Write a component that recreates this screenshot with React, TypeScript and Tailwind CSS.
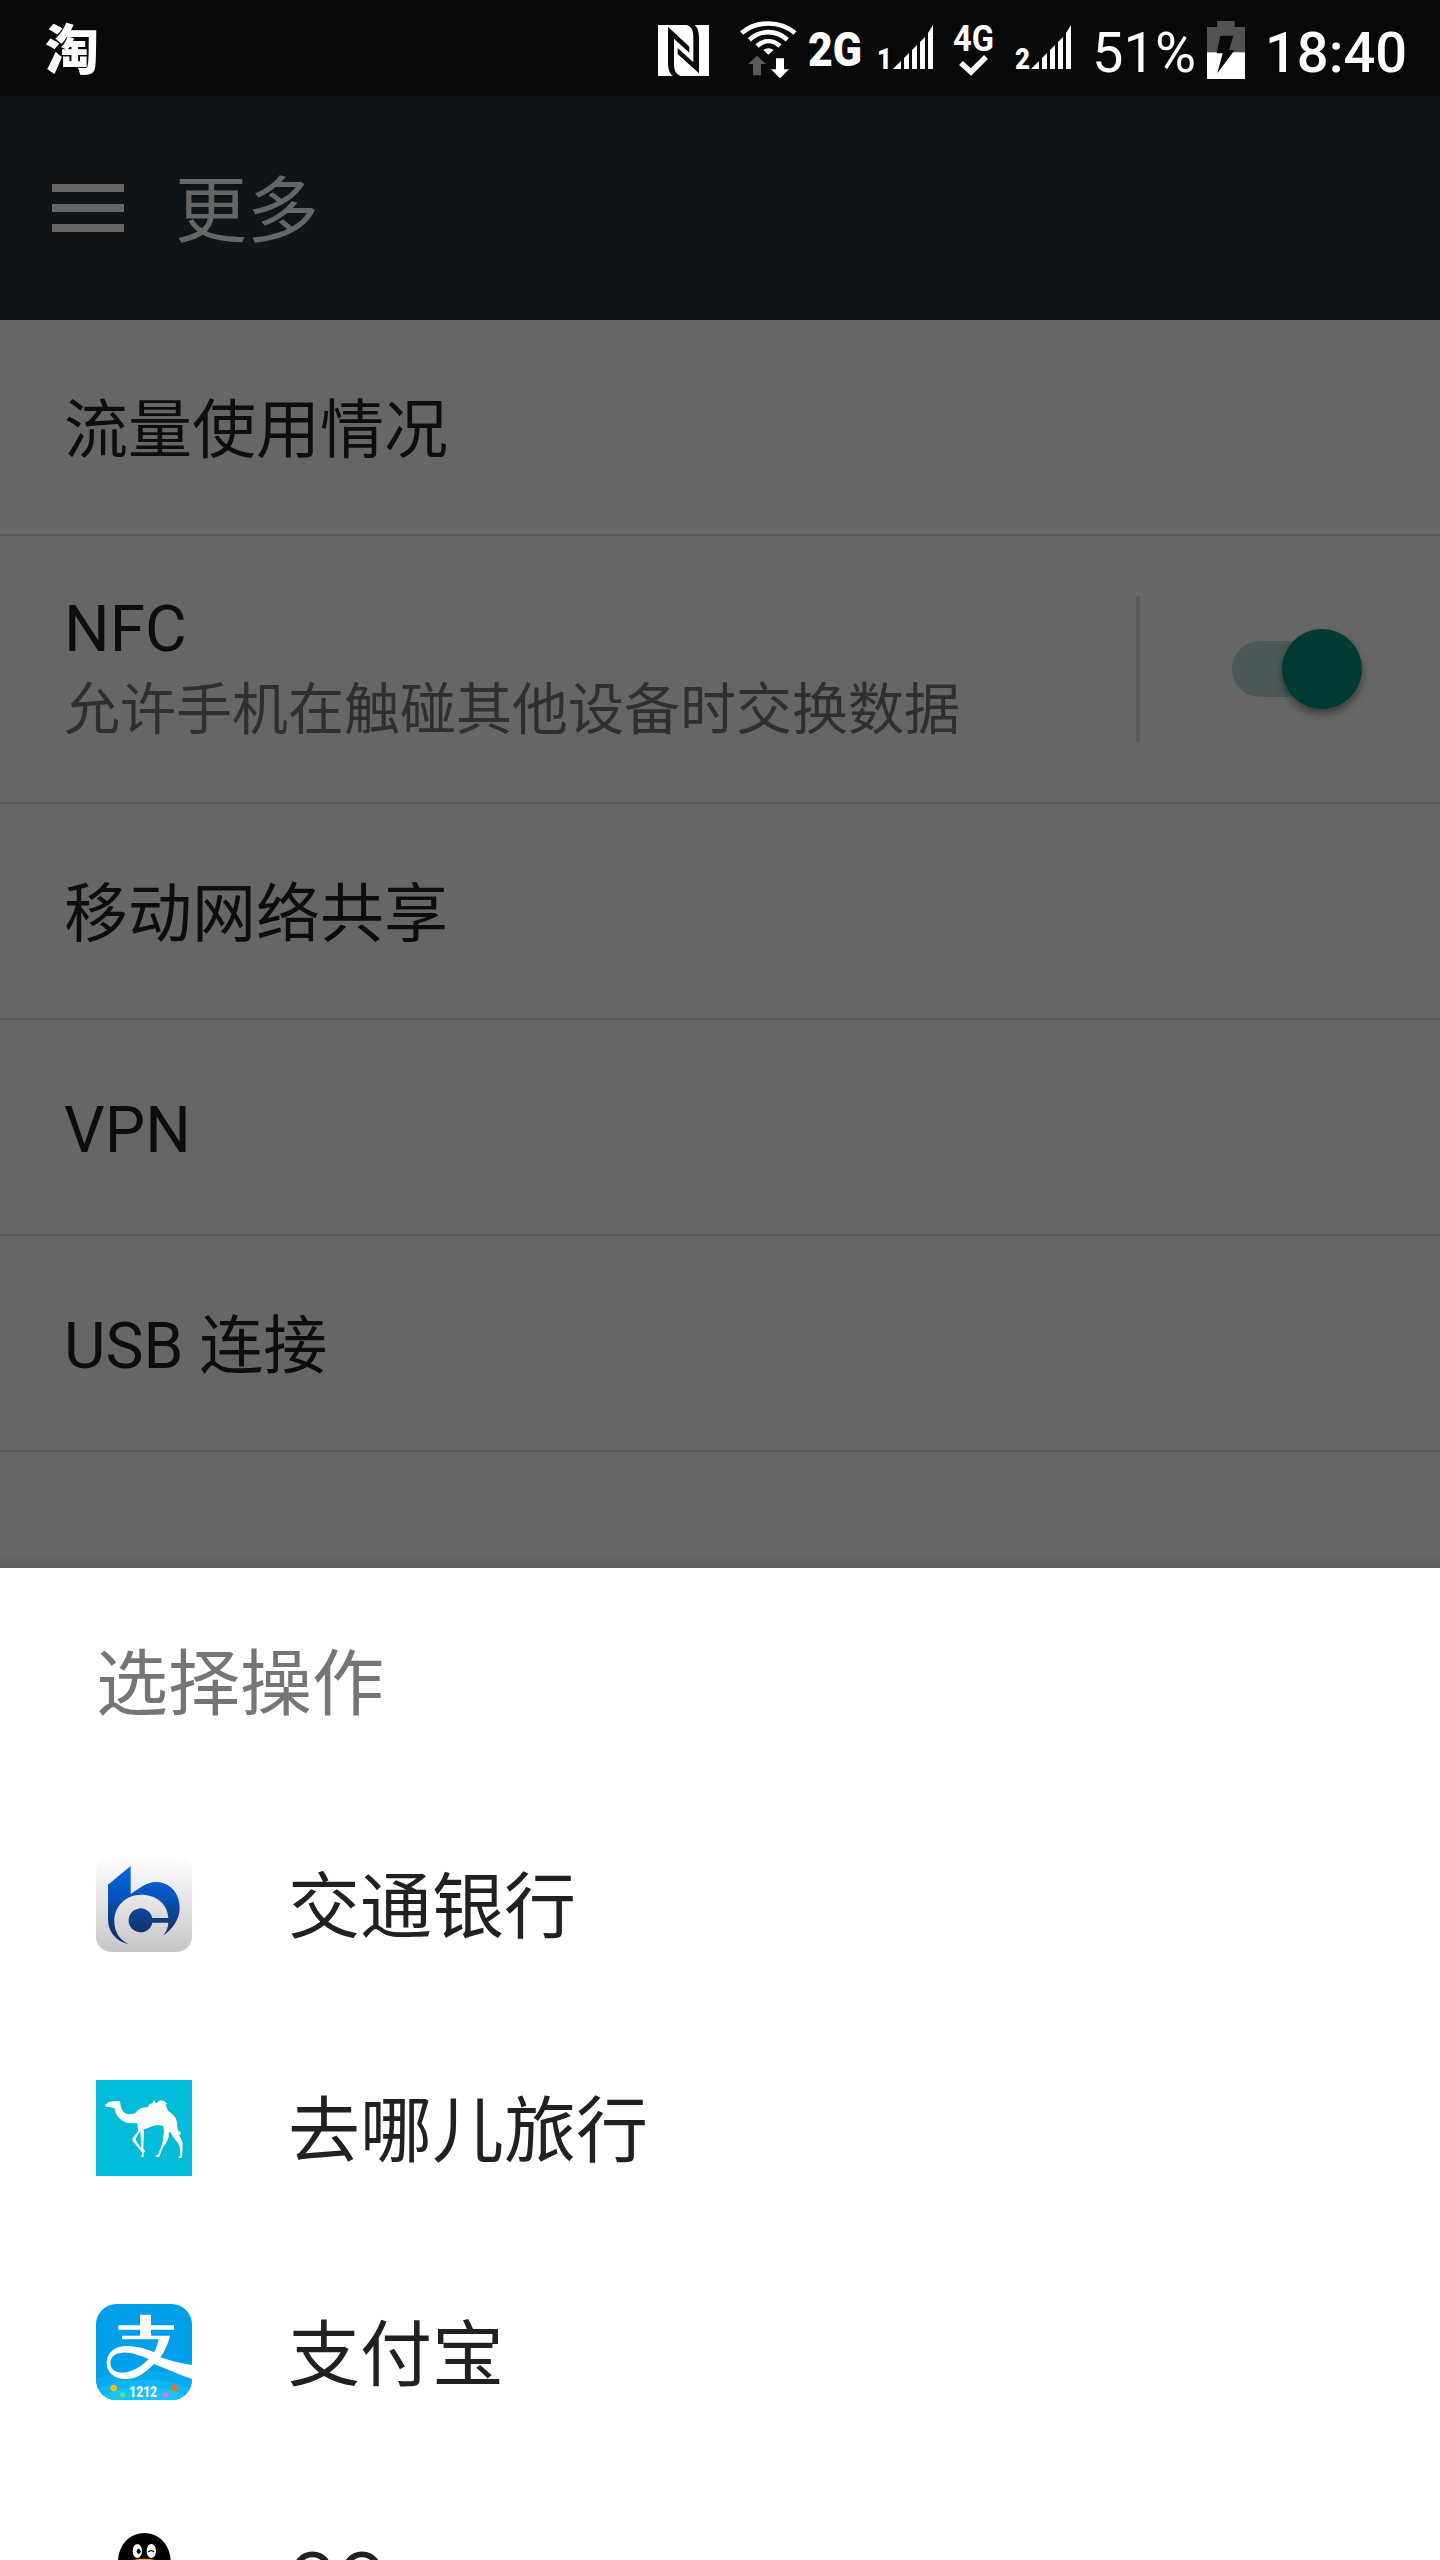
import { ReactNode } from "react";

const NfcIcon = () => (
  <svg className="h-[51px] w-[51px] shrink-0" viewBox="54 75 153 153">
    <path d="M54 75H207V228H54Z" fill="#fff" />
    <path d="M84 80L148 140V158L102 116V190C102 212 107 223 124 229H100C89 221 84 208 84 188Z" fill="#07090a" />
    <path d="M177 220L113 162V144L160 187V112C160 90 155 80 138 74H162C173 82 177 94 177 114Z" fill="#07090a" />
  </svg>
);

const WifiIcon = () => (
  <svg className="h-[58px] w-[57px] shrink-0" viewBox="300 62 171 174">
    <g fill="none" stroke="#fff" strokeWidth="14">
      <path d="M305 98C350 60 420 60 465 98" />
      <path d="M328 118C362 88 408 88 442 118" />
      <path d="M351 137C372 118 398 118 420 137" />
    </g>
    <path d="M370 149Q385 138 401 149L385 163Z" fill="#fff" />
    <path d="M351 166L378 191H363V225H339V191H324Z" fill="#5a5b5c" />
    <path d="M408 174H432V207H447L420 234L393 207H408Z" fill="#fff" />
  </svg>
);

const SignalIcon = ({ sim }: { sim: string }) => (
  <svg className="h-[50px] w-[57px] shrink-0 overflow-visible" viewBox="0 0 57 50">
    <text x="0" y="46" fontSize="29" fontWeight="900" fill="#fff" textLength="15" lengthAdjust="spacingAndGlyphs">{sim}</text>
    <path d="M16 46L24 38V46Z M27 35L32 30V46H27Z M35 27L40 22V46H35Z M43 19L48 14V46H43Z M51 10L56 2V46H51Z" fill="#fff" />
  </svg>
);

const BatteryIcon = () => (
  <svg className="h-[58px] w-[38px] shrink-0" viewBox="501 63 114 174">
    <path d="M531 63H584V81H615V157H501V81H531Z" fill="#515253" />
    <path d="M501 157H615V237H501Z" fill="#fff" />
    <path d="M541 107H580L567 150H584L532 220L548 160H530Z" fill="#07090a" />
  </svg>
);

const BankIcon = () => (
  <svg className="h-24 w-24 shrink-0" viewBox="48 48 288 288">
    <defs>
      <linearGradient id="bankBg" x1="0" y1="0" x2="0" y2="1">
        <stop offset="0" stopColor="#fff" />
        <stop offset="1" stopColor="#c6c6c6" />
      </linearGradient>
      <linearGradient id="bankFg" x1="0" y1="78" x2="0" y2="312" gradientUnits="userSpaceOnUse">
        <stop offset="0" stopColor="#0565e3" />
        <stop offset="0.4" stopColor="#0753bd" />
        <stop offset="0.75" stopColor="#11387a" />
        <stop offset="1" stopColor="#11306a" />
      </linearGradient>
    </defs>
    <rect x="48" y="48" width="288" height="288" rx="46" fill="url(#bankBg)" />
    <path d="M152 78V162L187 139C207 126 229 122 251 130C281 140 300 170 299 207C298 240 275 269 250 287C260 273 265 259 265 248H217A36 36 0 1 1 217 234H265C263 192 229 164 184 164C139 164 103 197 103 243C103 276 119 300 145 312C109 305 84 275 84 239V134Z" fill="url(#bankFg)" />
  </svg>
);

const CamelIcon = () => (
  <svg className="h-24 w-24 shrink-0" viewBox="48 60 288 288">
    <rect x="48" y="60" width="288" height="288" fill="#00bcd8" />
    <path d="M76 135L86 126L100 124L120 123L122 137C126 154 135 163 150 163C160 163 166 160 171 154C178 145 190 141 204 142L207 133L217 130L222 120L229 130L240 121L253 123L261 131L256 134L265 153C280 162 291 175 291 190L294 213L303 216L301 224L297 226C304 237 309 246 308 259L306 293L296 294L295 291L301 287L299 259C294 245 280 236 271 216L266 218C269 238 255 252 248 265L238 290L226 291L228 287L235 282L244 259C251 242 249 226 252 216L250 198L232 195C218 196 207 204 191 208C193 226 190 246 190 267L196 273L191 279L191 291L182 291L187 281L183 273L161 247C155 240 156 236 161 230L175 212L171 190L141 189C127 182 113 174 107 158L103 145L88 141L77 140Z M181 212L168 235C166 241 171 247 184 265Z" fill="#fff" fillRule="evenodd" />
  </svg>
);

const AlipayIcon = () => (
  <svg className="h-24 w-24 shrink-0" viewBox="48 42 288 288">
    <defs>
      <clipPath id="alipayClip"><rect x="48" y="42" width="288" height="288" rx="62" /></clipPath>
    </defs>
    <g clipPath="url(#alipayClip)">
      <rect x="48" y="42" width="288" height="288" fill="#009fea" />
      <ellipse cx="192" cy="340" rx="220" ry="98" fill="#08a9ed" />
      <ellipse cx="192" cy="345" rx="185" ry="76" fill="#11b5f0" />
      <ellipse cx="192" cy="345" rx="145" ry="54" fill="#18c2f2" />
      <path d="M180 74H213V106H282V119H213V137H270C264 163 253 186 241 202C270 212 302 220 338 225V268C298 254 258 236 222 222C194 250 168 268 136 267C99 266 78 244 80 216C82 184 109 167 143 168C174 169 201 177 222 187C229 174 233 160 236 148H126V137H180V119H115V106H180Z M206 208C177 195 151 186 127 188C104 190 91 202 91 219C92 239 106 248 128 248C157 247 180 232 206 208Z" fill="#fff" fillRule="evenodd" />
      <circle cx="101" cy="294" r="10" fill="#f6b91c" />
      <circle cx="128" cy="314" r="8" fill="#4de0a0" />
      <circle cx="283" cy="294" r="10" fill="#f06a35" />
      <circle cx="257" cy="314" r="8" fill="#e66ee8" />
    </g>
    <text x="148" y="320" fontSize="44" fontWeight="900" fill="#fff" textLength="83" lengthAdjust="spacingAndGlyphs">1212</text>
  </svg>
);

const QqIcon = () => (
  <svg className="h-24 w-24 shrink-0" viewBox="48 84 288 288">
    <path d="M193 99C146 99 115 138 114 184V290H272V184C271 138 240 99 193 99Z" fill="#000" />
    <ellipse cx="172" cy="153" rx="14" ry="21" fill="#fff" />
    <ellipse cx="214" cy="153" rx="14" ry="21" fill="#fff" />
    <ellipse cx="176" cy="154" rx="6" ry="8" fill="#000" />
    <path d="M205 156Q214 148 222 156" fill="none" stroke="#000" strokeWidth="4" />
    <ellipse cx="193" cy="190" rx="48" ry="14" fill="#f4a51c" />
  </svg>
);

const apps: { name: string; icon: ReactNode }[] = [
  { name: "交通银行", icon: <BankIcon /> },
  { name: "去哪儿旅行", icon: <CamelIcon /> },
  { name: "支付宝", icon: <AlipayIcon /> },
  { name: "QQ", icon: <QqIcon /> },
];

function SettingRow({ title }: { title: string }) {
  return (
    <div className="flex h-[216px] items-center border-b-2 border-[#5a5a5a] px-16 pt-2 text-[64px] leading-[76px] text-[#0d0d0d]">
      {title}
    </div>
  );
}

function StatusBar() {
  return (
    <div className="flex h-24 items-start bg-[#07090a] text-white">
      <span className="ml-[45px] mt-[16px] w-[55px] text-[54px] font-black leading-[72px]">淘</span>
      <div className="ml-[558px] mt-[25px]"><NfcIcon /></div>
      <div className="ml-[31px] mt-[21px]"><WifiIcon /></div>
      <svg className="ml-[11px] mt-[26px] h-[46px] w-[54px] shrink-0 overflow-visible" viewBox="0 0 54 46">
        <text x="0" y="40" fontSize="48" fontWeight="900" fill="#fff" textLength="54" lengthAdjust="spacingAndGlyphs">2G</text>
      </svg>
      <div className="ml-[15px] mt-[23px]"><SignalIcon sim="1" /></div>
      <svg className="ml-[19px] mt-[18px] h-[60px] w-[42px] shrink-0 overflow-visible" viewBox="0 -4 42 60">
        <text x="0" y="29" fontSize="37" fontWeight="700" fill="#fff" textLength="41" lengthAdjust="spacingAndGlyphs">4G</text>
        <path d="M8 41L18 50L33 35" fill="none" stroke="#fff" strokeWidth="5.5" />
      </svg>
      <div className="ml-[20px] mt-[23px]"><SignalIcon sim="2" /></div>
      <span className="ml-[20px] mt-[21px] w-[104px] text-[56px] leading-[64px]">51%</span>
      <div className="ml-[11px] mt-[21px]"><BatteryIcon /></div>
      <span className="ml-[20px] mt-[21px] text-[56px] font-medium leading-[64px]">18:40</span>
    </div>
  );
}

export default function App() {
  return (
    <div lang="zh-CN" className="flex h-[2560px] w-[1440px] flex-col overflow-hidden bg-[#666666] font-['Roboto','Noto_Sans_CJK_SC',sans-serif]">
      <StatusBar />

      <header className="flex h-56 items-center bg-[#0e1417] pl-[52px]">
        <div className="flex w-[72px] flex-col gap-3">
          <div className="h-2 bg-[#666666]" />
          <div className="h-2 bg-[#666666]" />
          <div className="h-2 bg-[#666666]" />
        </div>
        <h1 className="ml-[51px] pt-2 text-[72px] leading-[84px] text-[#666666]">更多</h1>
      </header>

      <main className="flex h-[1248px] shrink-0 flex-col">
        <SettingRow title="流量使用情况" />
        <div className="flex h-[268px] items-center border-b-2 border-[#5a5a5a] pl-16">
          <div className="flex-1 pt-[5px]">
            <div className="text-[64px] leading-[76px] text-[#0d0d0d]">NFC</div>
            <div className="text-[56px] leading-[84px] text-[#2f2f2f]">允许手机在触碰其他设备时交换数据</div>
          </div>
          <div className="h-[146px] w-1 bg-[#5a5a5a]" />
          <div className="ml-[92px] mr-[78px] flex w-[130px] items-center">
            <div className="h-14 w-[90px] rounded-l-full bg-[#4b5958]" />
            <div className="-ml-10 h-20 w-20 shrink-0 rounded-full bg-[#003a34] shadow-[0_5px_8px_rgba(0,0,0,0.4)]" />
          </div>
        </div>
        <SettingRow title="移动网络共享" />
        <SettingRow title="VPN" />
        <SettingRow title="USB 连接" />
        <div className="flex-1" />
        <div className="h-4 bg-linear-to-b from-[#666666] to-[#5e5e5e]" />
      </main>

      {/* bottom sheet */}
      <section className="h-[992px] shrink-0 overflow-hidden bg-white">
        <h2 className="flex h-56 items-center pl-24 pt-[9px] text-[72px] leading-[84px] text-[#757575]">选择操作</h2>
        {apps.map((app) => (
          <div key={app.name} className="flex h-56 items-center gap-24 pl-24">
            {app.icon}
            <span className="pt-2 text-[72px] leading-[84px] text-[#212121]">{app.name}</span>
          </div>
        ))}
      </section>
    </div>
  );
}
